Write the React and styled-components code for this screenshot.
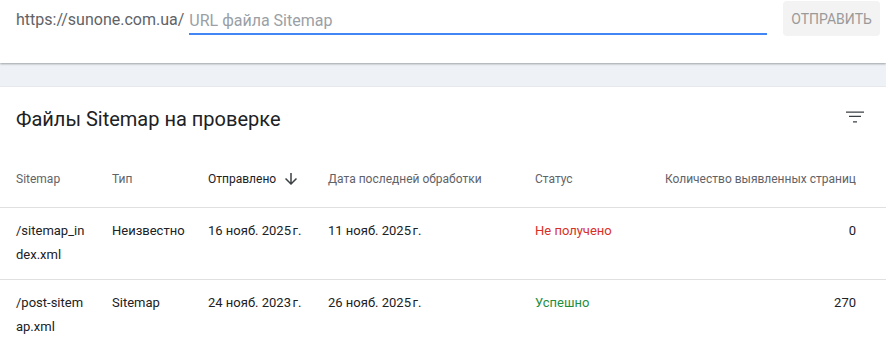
import React from "react";
import styled, { createGlobalStyle } from "styled-components";

const rows = [
  {
    path: "/sitemap_index.xml",
    type: "Неизвестно",
    sent: "16 нояб. 2025\u202Fг.",
    processed: "11 нояб. 2025\u202Fг.",
    status: "Не получено",
    ok: false,
    count: "0",
  },
  {
    path: "/post-sitemap.xml",
    type: "Sitemap",
    sent: "24 нояб. 2023\u202Fг.",
    processed: "26 нояб. 2025\u202Fг.",
    status: "Успешно",
    ok: true,
    count: "270",
  },
];

const App = () => {
  return (
    <>
      <GlobalStyle />
      <Page>
        <SubmitBar>
          <Prefix>https://sunone.com.ua/</Prefix>
          <UrlInput placeholder="URL файла Sitemap" />
          <SubmitButton disabled>Отправить</SubmitButton>
        </SubmitBar>
        <Gap />
        <Card>
          <CardHead>
            <Title>Файлы Sitemap на проверке</Title>
            <IconButton aria-label="Фильтр">
              <svg width="24" height="24" viewBox="0 0 24 24">
                <path
                  fill="#3c4043"
                  d="M10 17.6h4v-1.3h-4v1.3zM3 6.4v1.3h18V6.4H3zm3 5.6h12v-1.3H6V12z"
                />
              </svg>
            </IconButton>
          </CardHead>
          <HeadRow>
            <HeadCell>Sitemap</HeadCell>
            <HeadCell>Тип</HeadCell>
            <HeadCell $active>
              Отправлено
              <svg width="18" height="18" viewBox="0 0 24 24">
                <path
                  fill="#3c4043"
                  d="M20 12l-1.41-1.41L13 16.17V4h-2v12.17l-5.58-5.59L4 12l8 8 8-8z"
                />
              </svg>
            </HeadCell>
            <HeadCell>Дата последней обработки</HeadCell>
            <HeadCell>Статус</HeadCell>
            <HeadCell $right>Количество выявленных страниц</HeadCell>
          </HeadRow>
          {rows.map((r) => (
            <Row key={r.path}>
              <PathCell>{r.path}</PathCell>
              <Cell>{r.type}</Cell>
              <Cell>{r.sent}</Cell>
              <Cell>{r.processed}</Cell>
              <Status $ok={r.ok}>{r.status}</Status>
              <Cell $right>{r.count}</Cell>
            </Row>
          ))}
        </Card>
      </Page>
    </>
  );
};

const GlobalStyle = createGlobalStyle`
  html, body {
    margin: 0;
    padding: 0;
    background: #fff;
    font-family: Roboto, "Liberation Sans", Arial, sans-serif;
  }
`;

const Page = styled.div`
  width: 886px;
  display: flex;
  flex-direction: column;
`;

const SubmitBar = styled.div`
  position: relative;
  z-index: 1;
  height: 63px;
  display: flex;
  align-items: flex-start;
  padding: 1px 6px 0 16px;
  box-sizing: border-box;
  background: #fff;
  box-shadow: 0 1px 2px rgba(60, 64, 67, 0.45);
`;

const Prefix = styled.span`
  font-size: 16px;
  line-height: 38px;
  color: #5f6368;
  margin-right: 5px;
  white-space: nowrap;
`;

const UrlInput = styled.input`
  box-sizing: border-box;
  width: 579px;
  height: 34px;
  margin: 0;
  padding: 6px 0 0;
  border: 0;
  border-bottom: 2px solid #4285f4;
  outline: none;
  font-family: inherit;
  font-size: 16px;
  color: #202124;
  background: transparent;

  &::placeholder {
    color: #9aa0a6;
  }
`;

const SubmitButton = styled.button`
  margin-left: 16px;
  width: 97px;
  height: 35px;
  border: 0;
  border-radius: 4px;
  background: #f3f3f3;
  color: #9a9a9a;
  font-family: inherit;
  font-size: 14px;
  font-weight: 400;
  text-transform: uppercase;
  padding: 0;
`;

const Gap = styled.div`
  height: 23px;
  background: #eef1f5;
  border-bottom: 1px solid #e6e8ec;
`;

const Card = styled.section`
  background: #fff;
`;

const CardHead = styled.div`
  height: 63px;
  display: flex;
  align-items: center;
  justify-content: space-between;
  padding: 0 19px 0 16px;
`;

const Title = styled.h2`
  margin: 0;
  font-size: 20px;
  font-weight: 400;
  color: #202124;
`;

const IconButton = styled.span`
  display: flex;
  margin-top: -4px;
`;

const grid = `
  display: grid;
  grid-template-columns: 96px 96px 120px 207px 1fr auto;
  padding: 0 30px 0 16px;
  border-bottom: 1px solid #e0e0e0;
`;

const HeadRow = styled.div`
  ${grid};
  height: 58px;
  align-items: center;
  box-sizing: border-box;
`;

const HeadCell = styled.div`
  display: flex;
  align-items: center;
  gap: 6px;
  font-size: 12px;
  color: ${(p) => (p.$active ? "#202124" : "#5f6368")};
  justify-content: ${(p) => (p.$right ? "flex-end" : "flex-start")};
  white-space: nowrap;
`;

const Row = styled.div`
  ${grid};
  height: 72px;
  box-sizing: border-box;
  padding-top: 11px;
  align-items: start;
`;

const Cell = styled.div`
  font-size: 13px;
  line-height: 24px;
  color: #202124;
  text-align: ${(p) => (p.$right ? "right" : "left")};
  white-space: nowrap;
`;

const PathCell = styled(Cell)`
  white-space: normal;
  word-break: break-all;
  width: 70px;
`;

const Status = styled(Cell)`
  color: ${(p) => (p.$ok ? "#1e8e3e" : "#d93025")};
`;

export default App;
